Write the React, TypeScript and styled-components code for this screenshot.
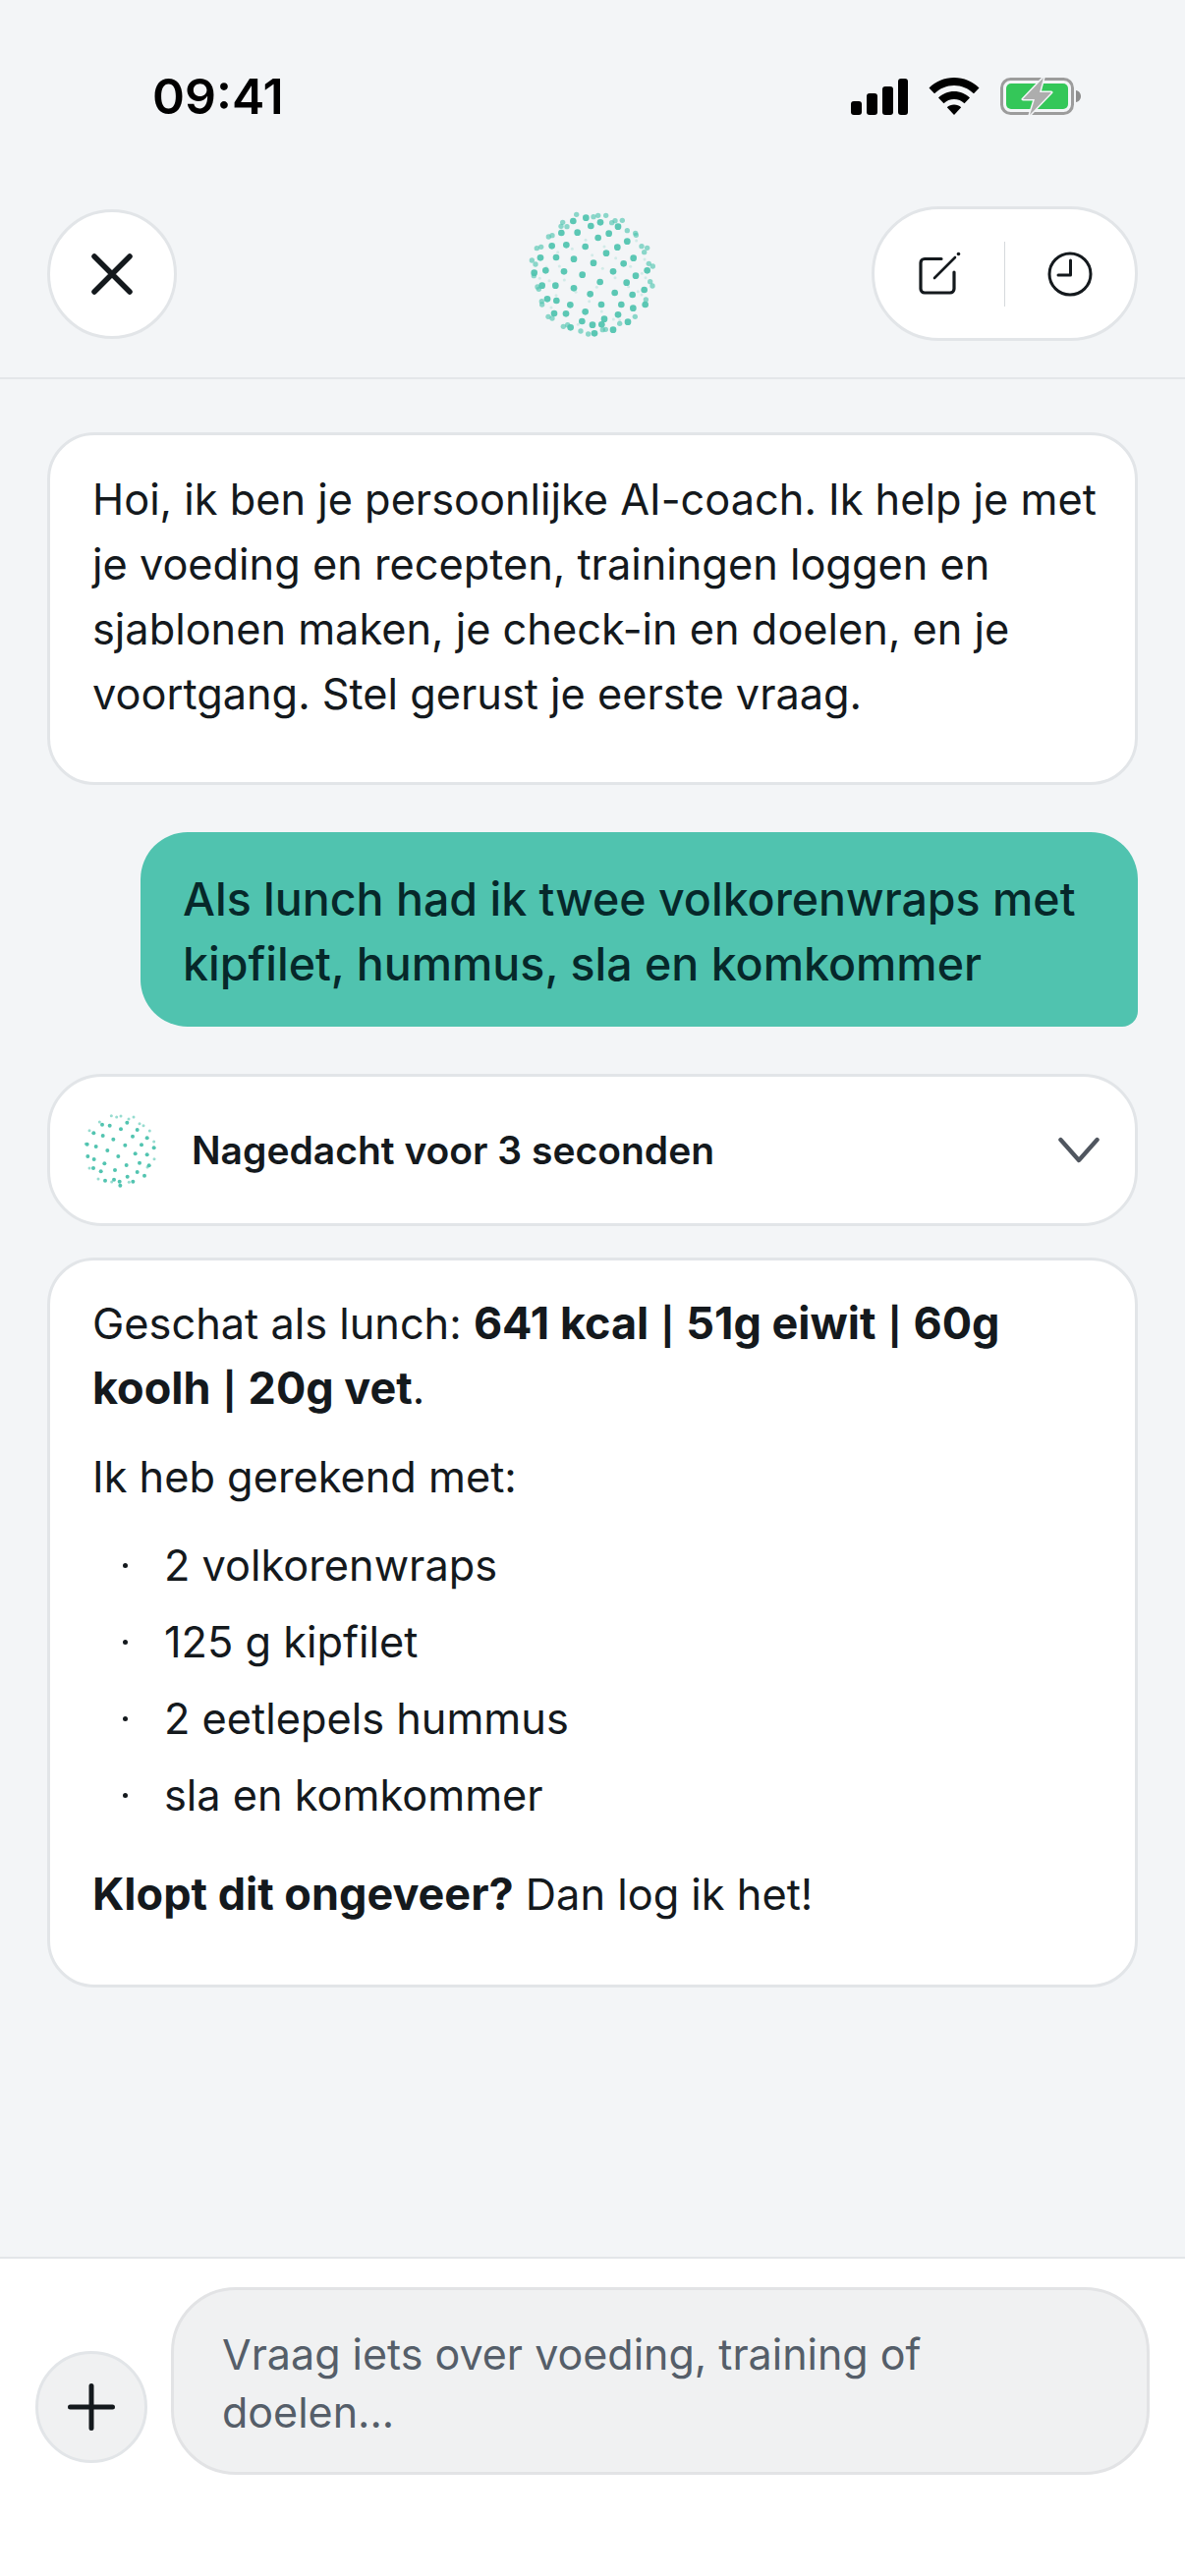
import React from "react";
import styled, { createGlobalStyle } from "styled-components";

const GlobalStyle = createGlobalStyle`
  html, body {
    margin: 0;
    padding: 0;
    background: #f3f5f7;
  }
  * {
    box-sizing: border-box;
  }
`;

const Screen = styled.div`
  width: 1206px;
  height: 2622px;
  display: flex;
  flex-direction: column;
  overflow: hidden;
  background: #f3f5f7;
  color: #14191d;
  font-family: "Inter", "Liberation Sans", sans-serif;
`;

const StatusBar = styled.div`
  height: 210px;
  flex-shrink: 0;
  display: flex;
  justify-content: space-between;
  align-items: flex-start;
  padding: 68px 106px 0 155px;
`;

const Time = styled.div`
  font-size: 50px;
  line-height: 60px;
  font-weight: 600;
  color: #000;
`;

const StatusIcons = styled.div`
  display: flex;
  align-items: center;
  gap: 21px;
  padding-top: 10px;
`;

const Header = styled.header`
  flex-shrink: 0;
  display: grid;
  grid-template-columns: 1fr auto 1fr;
  align-items: center;
  padding: 0 48px 37px;
  border-bottom: 2px solid #e3e6e9;
`;

const RoundButton = styled.button<{ $size: number; $fill: string }>`
  width: ${(props) => props.$size}px;
  height: ${(props) => props.$size}px;
  flex-shrink: 0;
  padding: 0;
  display: flex;
  align-items: center;
  justify-content: center;
  border-radius: 50%;
  border: 3px solid #e2e5e8;
  background: ${(props) => props.$fill};
`;

const ActionPill = styled.div`
  justify-self: end;
  width: 271px;
  height: 137px;
  display: flex;
  align-items: center;
  border-radius: 69px;
  border: 3px solid #e2e5e8;
  background: #fff;
`;

const PillSlot = styled.div`
  flex: 1;
  display: flex;
  align-items: center;
  justify-content: center;
`;

const PillDivider = styled.div`
  width: 1px;
  height: 66px;
  background: #d6d9dc;
`;

const Messages = styled.main`
  flex: 1;
  display: flex;
  flex-direction: column;
  padding: 54px 48px 0;
`;

const Card = styled.div<{ $bottom: number; $top: number }>`
  padding: ${(props) => props.$top}px 24px ${(props) => props.$bottom}px 43px;
  background: #fff;
  border: 3px solid #e2e5e8;
  border-radius: 48px;
  font-size: 43.3px;
  line-height: 66px;
`;

const UserBubble = styled.div`
  margin: 48px 0 48px 95px;
  padding: 35px 40px 31px 43px;
  background: #50c3af;
  border-radius: 48px 48px 16px 48px;
  font-size: 46.5px;
  line-height: 66px;
  font-weight: 450;
  color: #06282a;
`;

const ThinkingRow = styled.div`
  height: 155px;
  margin-bottom: 32px;
  display: flex;
  align-items: center;
  padding: 0 36px 0 33px;
  background: #fff;
  border: 3px solid #e2e5e8;
  border-radius: 56px;
`;

const ThinkingLabel = styled.span`
  flex: 1;
  margin-left: 35px;
  font-size: 39px;
  font-weight: 600;
`;

const Paragraph = styled.p<{ $gap?: number }>`
  margin: 0 0 ${(props) => props.$gap ?? 0}px;
`;

const Strong = styled.strong`
  font-size: 45px;
  line-height: 0;
  font-weight: 700;
`;

const Pipe = styled.span`
  margin: 0 1.5px;
  font-size: 37px;
  line-height: 0;
`;

const BulletList = styled.ul`
  list-style: none;
  margin: 0 0 35px;
  padding: 0;
  display: flex;
  flex-direction: column;
  gap: 12px;
`;

const BulletItem = styled.li`
  display: flex;
  align-items: center;
  padding-left: 31px;
  &::before {
    content: "";
    width: 5px;
    height: 5px;
    margin-right: 37px;
    border-radius: 50%;
    background: #14191d;
  }
`;

const Composer = styled.footer`
  flex-shrink: 0;
  height: 325px;
  display: flex;
  align-items: flex-start;
  gap: 24px;
  padding: 29px 36px 0;
  background: #fff;
  border-top: 2px solid #e3e6e9;
`;

const PlusSlot = styled.div`
  padding-top: 65px;
`;

const InputBox = styled.div`
  flex: 1;
  height: 191px;
  padding: 36px 100px 0 49px;
  background: #f0f1f2;
  border: 3px solid #e2e3e5;
  border-radius: 66px;
  font-size: 43px;
  line-height: 59px;
  color: #555e69;
`;

type Dot = [number, number];

const bigStrong: Dot[] = [
  [312, 233], [278, 269], [372, 259], [332, 291], [252, 221], [351, 203], [404, 235], [222, 259],
  [287, 183], [229, 178], [198, 216], [166, 256], [196, 302], [252, 310], [302, 328], [377, 324],
  [413, 293], [441, 272], [385, 185], [326, 156], [263, 140], [359, 143], [304, 120], [214, 141],
  [185, 181], [150, 217], [131, 263], [155, 302], [171, 343], [199, 348], [241, 361], [287, 382],
  [336, 360], [397, 360], [431, 330], [467, 315], [476, 256], [434, 218], [415, 167], [387, 122],
  [333, 109], [250, 105], [289, 95], [228, 388], [192, 387], [277, 411], [345, 404], [387, 391],
  [433, 371], [470, 360], [417, 413], [309, 422], [337, 421], [242, 430], [372, 437], [315, 448],
];

const bigSoft: Dot[] = [
  [260, 85], [350, 88], [312, 92], [326, 88], [400, 103], [378, 104], [218, 109], [213, 121],
  [231, 122], [175, 153], [186, 149], [139, 188], [152, 184], [124, 225], [135, 237], [130, 272],
  [141, 306], [145, 313], [154, 350], [155, 360], [174, 397], [186, 402], [220, 427], [233, 422],
  [273, 441], [296, 450], [340, 437], [349, 436], [392, 418], [439, 397], [472, 345], [492, 303],
  [485, 290], [493, 243], [481, 235], [476, 187], [459, 182], [467, 200], [440, 142], [442, 148],
  [415, 134], [368, 110],
];

const bigFaint: Dot[] = [
  [288, 163], [345, 183], [247, 190], [203, 200], [308, 209], [380, 218], [208, 243], [340, 250],
  [425, 244], [168, 246], [148, 280], [177, 287], [223, 285], [378, 278], [460, 265], [468, 222],
  [443, 165], [408, 167], [322, 307], [258, 322], [198, 332], [299, 350], [419, 305], [459, 330],
  [448, 320], [183, 369], [337, 381], [373, 405], [265, 421], [392, 408], [471, 278],
];

const smallStrong: Dot[] = [
  [260, 240], [296, 258], [242, 274], [275, 292], [327, 284], [319, 231], [228, 229], [207, 262],
  [201, 301], [233, 314], [300, 319], [265, 334], [340, 312], [346, 257], [363, 236], [363, 287],
  [333, 340], [303, 354], [222, 338], [249, 198], [283, 209], [333, 211], [302, 189], [226, 195],
  [200, 221], [182, 292], [180, 255], [262, 363], [279, 369], [235, 366], [199, 328], [369, 320],
  [384, 266], [281, 381], [320, 369], [355, 351],
];

const smallSoft: Dot[] = [
  [254, 168], [270, 172], [283, 169], [322, 172], [307, 178], [218, 187], [187, 213], [340, 192],
  [352, 198], [371, 214], [384, 247], [385, 300], [364, 325], [176, 254], [187, 328], [214, 361],
  [255, 370], [308, 371],
];

const DotSphere = ({ large }: { large?: boolean }) => {
  if (large) {
    return (
      <svg width="210" height="180" viewBox="-6 -3 630 540" fill="#52c4b0" style={{ display: "block" }}>
        {bigStrong.map(([x, y]) => (
          <circle key={`${x}-${y}`} cx={x} cy={y} r="10" opacity="0.95" />
        ))}
        {bigSoft.map(([x, y]) => (
          <circle key={`${x}-${y}`} cx={x} cy={y} r="8" opacity="0.65" />
        ))}
        {bigFaint.map(([x, y]) => (
          <circle key={`${x}-${y}`} cx={x} cy={y} r="4.5" opacity="0.2" />
        ))}
      </svg>
    );
  }
  return (
    <svg width="76" height="76" viewBox="166 160 228 228" fill="#52c4b0" style={{ display: "block", flexShrink: 0 }}>
      {smallStrong.map(([x, y]) => (
        <circle key={`${x}-${y}`} cx={x} cy={y} r="6" />
      ))}
      {smallSoft.map(([x, y]) => (
        <circle key={`${x}-${y}`} cx={x} cy={y} r="4.5" opacity="0.6" />
      ))}
    </svg>
  );
};

const LogoSlot = styled.div`
  height: 137px;
  display: flex;
  align-items: center;
  justify-content: center;
`;

const SignalIcon = () => (
  <svg width="58" height="37" viewBox="0 0 58 37" fill="#000">
    <rect x="0" y="23" width="11" height="14" rx="3" />
    <rect x="16" y="15" width="11" height="22" rx="3" />
    <rect x="32" y="8" width="11" height="29" rx="3" />
    <rect x="48" y="0" width="10" height="37" rx="3" />
  </svg>
);

const WifiIcon = () => (
  <svg width="52" height="38" viewBox="0 0 52 38" fill="#000">
    <path d="M26 0C16 0 7.500 3.800 .5 10.500l5.500 5.800C11.500 11 18.500 8 26 8s14.500 3 20 8.300l5.500-5.800C44.500 3.800 36 0 26 0z" />
    <path d="M26 14c-6.200 0-11.800 2.400-16 6.500l5.500 5.700c2.800-2.700 6.500-4.200 10.500-4.200s7.700 1.500 10.500 4.200l5.500-5.700C37.800 16.400 32.200 14 26 14z" />
    <path d="M26 27.500c-2.800 0-5.300 1-7.200 2.800L26 38l7.200-7.700c-1.900-1.800-4.400-2.800-7.200-2.800z" />
  </svg>
);

const BatteryIcon = () => (
  <svg width="82" height="40" viewBox="0 0 82 40">
    <rect x="1.500" y="2.500" width="72" height="35" rx="9" fill="none" stroke="#9c9c9c" strokeWidth="3" />
    <rect x="6" y="7" width="63" height="26" rx="5" fill="#34c759" />
    <path d="M77 14c3 .5 5 3 5 6s-2 5.500-5 6z" fill="#8e8e8e" />
    <path
      d="M44 1 23 23h12l-5 16 22-23H40z"
      fill="#adadad"
      stroke="#f3f5f7"
      strokeWidth="3"
      strokeLinejoin="round"
      paintOrder="stroke"
    />
  </svg>
);

const CloseIcon = () => (
  <svg width="42" height="42" viewBox="0 0 42 42" fill="none" stroke="#14191d" strokeWidth="5.500" strokeLinecap="round">
    <path d="M3 3 39 39M39 3 3 39" />
  </svg>
);

const ComposeIcon = () => (
  <svg width="46" height="46" viewBox="0 0 46 46" fill="none" stroke="#14191d" strokeLinecap="round" strokeLinejoin="round">
    <path d="M25 7.500H8a4 4 0 0 0-4 4V38a4 4 0 0 0 4 4h26a4 4 0 0 0 4-4V21" strokeWidth="3.200" />
    <path d="M18 27 39 6" strokeWidth="2.600" />
    <circle cx="42.500" cy="2.500" r="1.800" fill="#14191d" stroke="none" />
  </svg>
);

const ClockIcon = () => (
  <svg width="46" height="46" viewBox="0 0 46 46" fill="none" stroke="#14191d" strokeWidth="3" strokeLinecap="round" strokeLinejoin="round">
    <circle cx="23" cy="23" r="21" />
    <path d="M23.500 9v15H11" />
  </svg>
);

const PlusIcon = () => (
  <svg width="48" height="48" viewBox="0 0 48 48" fill="none" stroke="#14191d" strokeWidth="5" strokeLinecap="round">
    <path d="M24 2.500v43M2.500 24h43" />
  </svg>
);

const ChevronIcon = () => (
  <svg width="42" height="27" viewBox="0 0 44 28" fill="none" stroke="#50565f" strokeWidth="4.500" strokeLinecap="round" strokeLinejoin="round">
    <path d="M2.500 3 22 25 41.500 3" />
  </svg>
);

const items = ["2 volkorenwraps", "125 g kipfilet", "2 eetlepels hummus", "sla en komkommer"];

const App = () => (
  <Screen>
    <GlobalStyle />
    <StatusBar>
      <Time>09:41</Time>
      <StatusIcons>
        <SignalIcon />
        <WifiIcon />
        <BatteryIcon />
      </StatusIcons>
    </StatusBar>
    <Header>
      <RoundButton $size={132} $fill="#fff">
        <CloseIcon />
      </RoundButton>
      <LogoSlot>
        <DotSphere large />
      </LogoSlot>
      <ActionPill>
        <PillSlot>
          <ComposeIcon />
        </PillSlot>
        <PillDivider />
        <PillSlot>
          <ClockIcon />
        </PillSlot>
      </ActionPill>
    </Header>
    <Messages>
      <Card $top={32} $bottom={57}>
        Hoi, ik ben je persoonlijke AI-coach. Ik help je met je voeding en recepten, trainingen loggen en sjablonen
        maken, je check-in en doelen, en je voortgang. Stel gerust je eerste vraag.
      </Card>
      <UserBubble>Als lunch had ik twee volkorenwraps met kipfilet, hummus, sla en komkommer</UserBubble>
      <ThinkingRow>
        <DotSphere />
        <ThinkingLabel>Nagedacht voor 3 seconden</ThinkingLabel>
        <ChevronIcon />
      </ThinkingRow>
      <Card $top={31} $bottom={59}>
        <Paragraph $gap={24}>
          Geschat als lunch:{" "}
          <Strong>
            641 kcal <Pipe>|</Pipe> 51g eiwit <Pipe>|</Pipe> 60g koolh <Pipe>|</Pipe> 20g vet
          </Strong>
          .
        </Paragraph>
        <Paragraph $gap={24}>Ik heb gerekend met:</Paragraph>
        <BulletList>
          {items.map((item) => (
            <BulletItem key={item}>{item}</BulletItem>
          ))}
        </BulletList>
        <Paragraph>
          <Strong>Klopt dit ongeveer?</Strong> Dan log ik het!
        </Paragraph>
      </Card>
    </Messages>
    <Composer>
      <PlusSlot>
        <RoundButton $size={114} $fill="#f0f1f2">
          <PlusIcon />
        </RoundButton>
      </PlusSlot>
      <InputBox>Vraag iets over voeding, training of doelen...</InputBox>
    </Composer>
  </Screen>
);

export default App;
